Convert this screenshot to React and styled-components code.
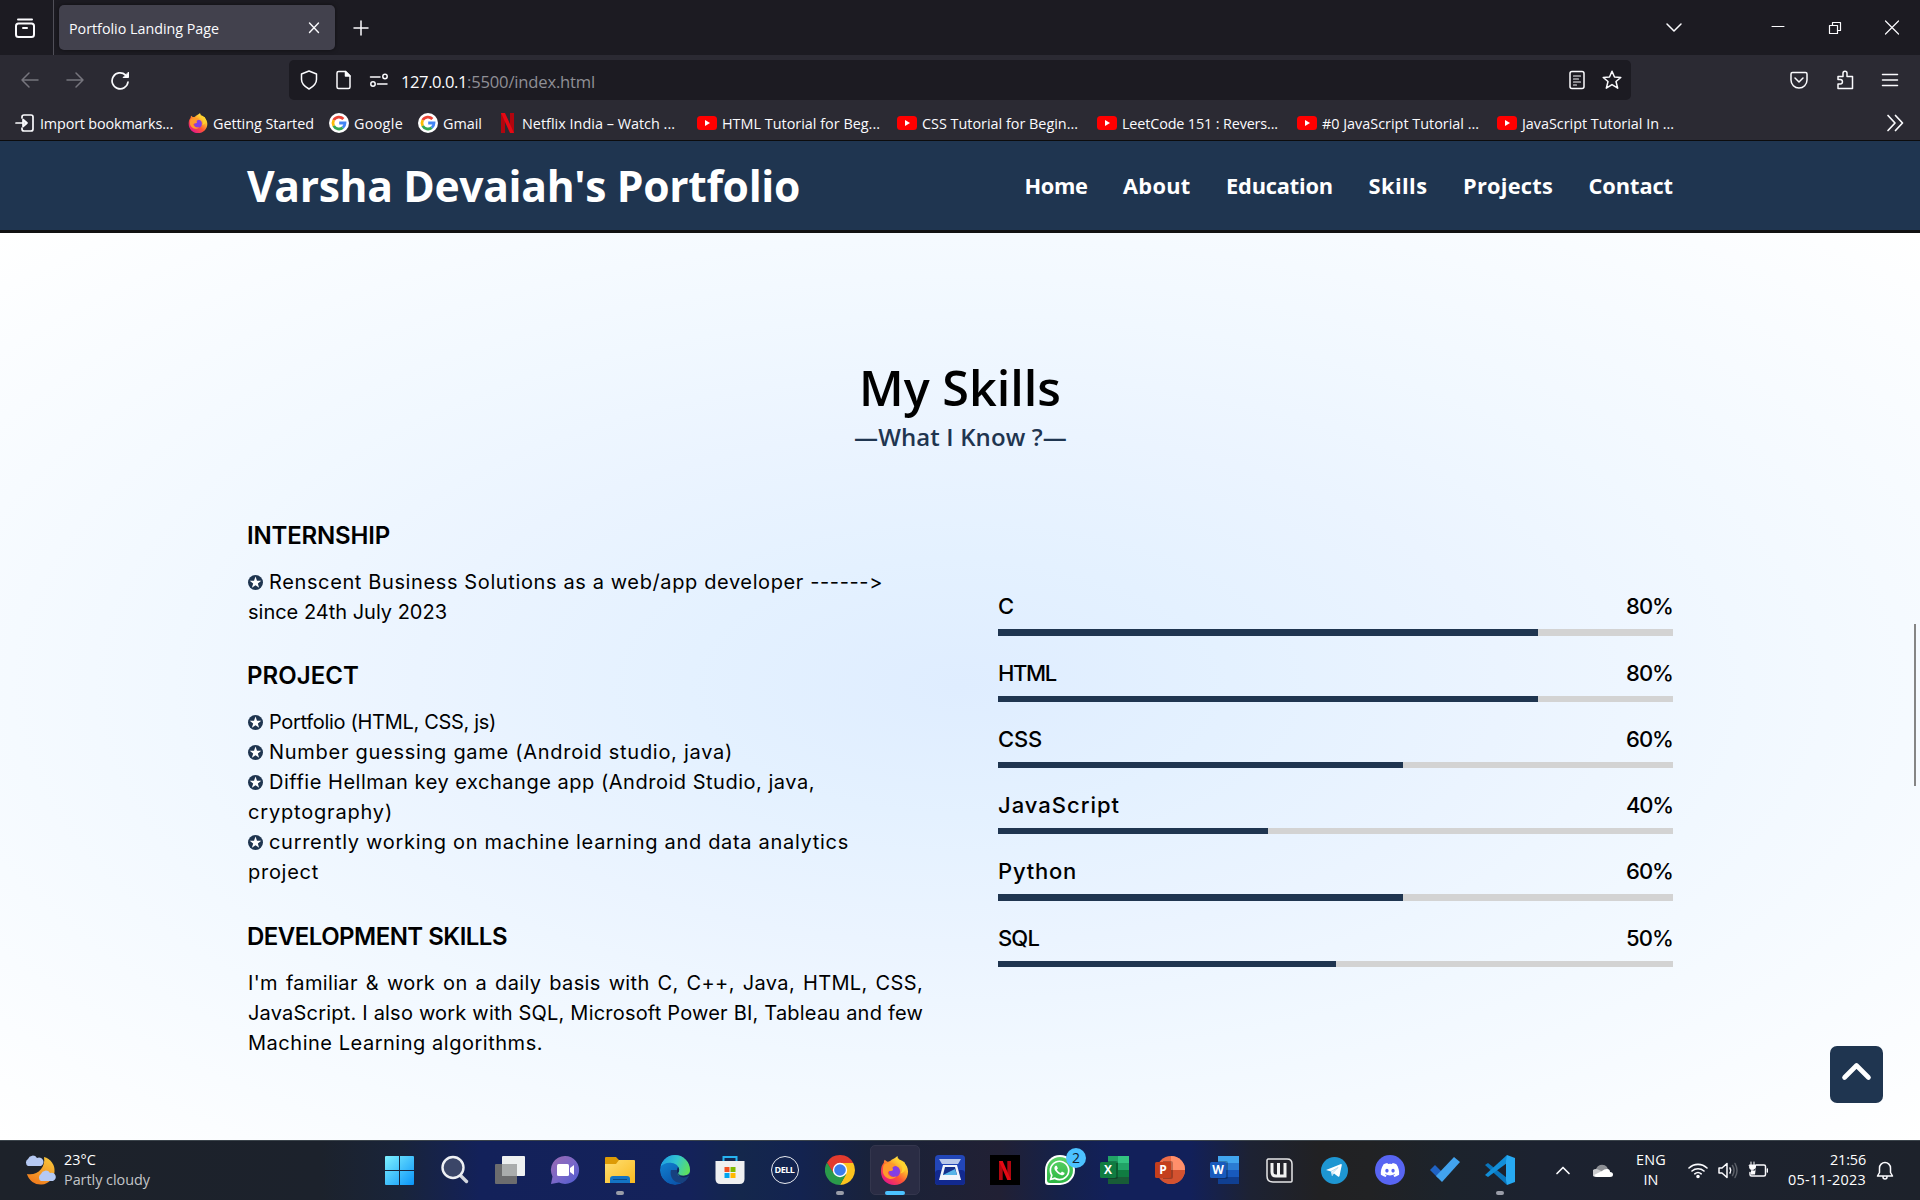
import React, { useLayoutEffect, useRef, useState } from "react";
import styled, { createGlobalStyle } from "styled-components";
import { FaDiscord, FaWhatsapp } from "react-icons/fa";

const GlobalStyle = createGlobalStyle`
  * { box-sizing: border-box; }
  html, body { margin: 0; padding: 0; overflow: hidden; background: #fff; }
  svg { display: block; flex: none; }
`;

const UI = `"Open Sans", "Noto Sans", sans-serif`;
const BODY = `Inter, "Open Sans", sans-serif`;
const NAVY = "#1f3550";

/* Single line of text tracked out (or in) to an exact measure. */
const FitBox = styled.span`
  display: block;
  flex: none;
  width: ${(p) => p.$w}px;
  white-space: pre;
  font-variant-ligatures: none;
`;
function Fit({ w, track, children }) {
  const ref = useRef(null);
  const [spacing, setSpacing] = useState(null);
  useLayoutEffect(() => {
    const natural = ref.current.getBoundingClientRect().width;
    const text = ref.current.textContent;
    const n = text.length;
    if (track !== undefined) {
      const spaces = text.split(" ").length - 1;
      setSpacing({ letterSpacing: track, wordSpacing: (w - natural - track * n) / spaces });
    } else setSpacing({ letterSpacing: (w - natural) / n });
  }, []);
  return (
    <FitBox $w={w}>
      <span ref={ref} style={spacing || undefined}>{children}</span>
    </FitBox>
  );
}

const Screen = styled.div`
  width: 1920px;
  height: 1200px;
  display: flex;
  flex-direction: column;
  overflow: hidden;
  font-family: ${UI};
`;

/* ---------- browser chrome ---------- */
const TabStrip = styled.div`
  height: 55px;
  background: #1c1b22;
  display: flex;
  align-items: center;
  color: #fbfbfe;
`;
const ViewButton = styled.div`
  width: 54px;
  height: 55px;
  padding-left: 14px;
  display: flex;
  align-items: center;
  border-right: 1px solid #504f58;
`;
const Tab = styled.div`
  width: 276px;
  height: 45px;
  margin-left: 5px;
  padding: 0 13px 0 10px;
  border-radius: 5px;
  background: #42414d;
  box-shadow: 0 0 4px rgba(0, 0, 0, 0.5);
  display: flex;
  align-items: center;
  justify-content: space-between;
  font-size: 14.3px;
`;
const TabTitle = styled.div`
  padding-top: 1px;
`;
const NewTab = styled.div`
  margin-left: 18px;
`;
const WindowButtons = styled.div`
  margin-left: auto;
  padding-right: 20px;
  display: flex;
  align-items: center;
`;
const Gap = styled.div`
  flex: none;
  width: ${(p) => p.$w}px;
`;
const Toolbar = styled.div`
  height: 50px;
  padding: 0 21px 0 20px;
  background: #2b2a33;
  color: #fbfbfe;
  display: flex;
  align-items: center;
`;
const NavButtons = styled.div`
  width: 269px;
  display: flex;
  gap: 25px;
  align-items: center;
`;
const UrlBar = styled.div`
  width: 1342px;
  height: 40px;
  padding: 0 9px 0 10px;
  border-radius: 5px;
  background: #1c1b22;
  display: flex;
  align-items: center;
  gap: 15px;
  font-size: 16.6px;
`;
const Url = styled.div`
  margin: 3px auto 0 -3px;
  display: flex;
  color: #fbfbfe;
`;
const Dim = styled.span`
  color: #8f8f96;
`;
const ToolbarEnd = styled.div`
  margin-left: auto;
  display: flex;
  gap: 26px;
`;
const Bookmarks = styled.div`
  height: 36px;
  padding: 1px 16px 0 15px;
  background: #2b2a33;
  border-bottom: 1px solid #0c0c0d;
  color: #fbfbfe;
  display: flex;
  align-items: center;
  justify-content: space-between;
  font-size: 14.4px;
`;
const BookmarkList = styled.div`
  display: flex;
  align-items: center;
`;
const Bookmark = styled.div`
  display: flex;
  align-items: center;
  flex: none;
  width: ${(p) => p.$w}px;
  gap: ${(p) => p.$gap || 5}px;
`;

/* ---------- web page ---------- */
const NavBar = styled.nav`
  height: 92px;
  padding: 0 247px 0 247px;
  background: ${NAVY};
  border-bottom: 3px solid #111;
  display: flex;
  align-items: center;
  justify-content: space-between;
  color: #fff;
`;
const Brand = styled.div`
  padding-bottom: 1px;
  font-size: 42.6px;
  font-weight: 700;
`;
const Links = styled.div`
  display: flex;
  gap: 35.5px;
  font-size: 21.8px;
  font-weight: 700;
`;
const Page = styled.main`
  height: 907px;
  display: flex;
  background: radial-gradient(ellipse farthest-corner at 50% 50%, #dfedff 0%, #e4f1ff 20%, #ebf4ff 40%, #f1f8ff 58%, #fff 100%);
`;
const Section = styled.section`
  width: 1905px;
  padding: 124px 232px 0 248px;
`;
const Title = styled.h2`
  margin: 0;
  height: 64px;
  padding-left: 611px;
  line-height: 60px;
  font-size: 48.5px;
  font-weight: 600;
  color: #000;
`;
const Subtitle = styled.div`
  height: 30px;
  padding: 1px 0 0 606px;
  line-height: 30px;
  font-size: 24px;
  font-weight: 600;
  color: ${NAVY};
`;
const Columns = styled.div`
  margin-top: 65px;
  display: grid;
  grid-template-columns: 675px 675px;
  column-gap: 75px;
  font-family: ${BODY};
  color: #000;
`;
const Block = styled.div`
  margin-bottom: ${(p) => p.$after}px;
  font-size: 20px;
  line-height: 30px;
`;
const BlockTitle = styled.h3`
  margin: 0 0 13px -1px;
  height: 38px;
  padding-top: 1px;
  line-height: 38px;
  font-size: 24px;
  font-weight: 600;
`;
const Line = styled.div`
  display: flex;
  align-items: center;
  gap: 6px;
`;
const Bars = styled.div`
  padding-top: 72.6px;
`;
const Skill = styled.div`
  height: 66.25px;
`;
const SkillHead = styled.div`
  height: 40.8px;
  padding-top: 0.8px;
  line-height: 34px;
  display: flex;
  justify-content: space-between;
  font-size: 22px;
  font-weight: 500;
`;
const Track = styled.div`
  height: 6.25px;
  background: #d3d3d3;
`;
const Fill = styled.div`
  height: 100%;
  background: ${NAVY};
`;
const Gutter = styled.div`
  width: 15px;
  display: flex;
  flex-direction: column;
  align-items: center;
  padding-left: 5px;
`;
const Thumb = styled.div`
  margin-top: 391px;
  width: 2px;
  height: 162px;
  background: #858585;
`;
const ToTop = styled.div`
  position: fixed;
  left: 1830px;
  top: 1046px;
  width: 53px;
  height: 57px;
  padding-bottom: 8px;
  border-radius: 7px;
  background: ${NAVY};
  display: flex;
  align-items: center;
  justify-content: center;
`;

/* ---------- taskbar ---------- */
const Taskbar = styled.footer`
  height: 60px;
  border-top: 1px solid #3b444b;
  color: #fff;
  display: flex;
  align-items: center;
  background: linear-gradient(90deg, #1d222a 0, #1c222c 320px, #19243a 400px, #13215a 480px, #14225a 690px, #14274c 740px, #132350 800px, #1a2238 880px, #212034 1000px, #15214a 1060px, #12205a 1110px, #12205a 1190px, #1d2233 1250px, #212123 1320px, #212224 1370px, #1c232c 1450px, #1c2230 1540px, #1d222b 1920px);
`;
const Weather = styled.div`
  flex: none;
  width: 372px;
  padding-left: 24px;
  display: flex;
  align-items: center;
  gap: 8px;
`;
const TwoLines = styled.div`
  font-size: 14.4px;
  line-height: 20px;
  padding-bottom: 2px;
  display: flex;
  flex-direction: column;
  align-items: ${(p) => p.$align || "flex-start"};
`;
const Faint = styled.div`
  color: #c3c5c8;
`;
const Apps = styled.div`
  display: flex;
`;
const AppCell = styled.div`
  position: relative;
  width: 55px;
  height: 57px;
  padding-bottom: 1px;
  display: flex;
  align-items: center;
  justify-content: center;
`;
const Tile = styled.div`
  width: 50px;
  height: 50px;
  border-radius: 5px;
  border: 1px solid #34364d;
  background: #2a2c44;
  display: flex;
  align-items: center;
  justify-content: center;
`;
const Running = styled.div`
  position: absolute;
  bottom: 4px;
  left: ${(p) => (p.$active ? 18 : 24)}px;
  width: ${(p) => (p.$active ? 20 : 8)}px;
  height: 4px;
  border-radius: 2px;
  background: ${(p) => (p.$active ? "#4cc2ff" : "#9a9da8")};
`;
const Badge = styled.div`
  position: absolute;
  left: 34px;
  top: 6px;
  width: 20px;
  height: 20px;
  border-radius: 10px;
  background: #4cc2ff;
  color: #10202c;
  font-size: 14px;
  line-height: 20px;
  text-align: center;
`;
const DellRing = styled.div`
  width: 28px;
  height: 28px;
  border: 1.5px solid #e8eaf0;
  border-radius: 50%;
  color: #fff;
  font: 700 9px/25px ${UI};
  letter-spacing: -0.5px;
  text-align: center;
`;
const NetflixTile = styled.div`
  width: 30px;
  height: 30px;
  background: #000;
  display: flex;
  align-items: center;
  justify-content: center;
`;
const WhatsApp = styled.div`
  width: 30px;
  height: 30px;
  border-radius: 15px 15px 15px 3px;
  background: #fff;
  display: flex;
  align-items: center;
  justify-content: center;
`;
const WhatsAppInner = styled.div`
  width: 26px;
  height: 26px;
  border-radius: 13px 13px 13px 3px;
  background: linear-gradient(#5bd266, #2cb742);
  display: flex;
  align-items: center;
  justify-content: center;
`;
const DiscordDisc = styled.div`
  width: 30px;
  height: 30px;
  border-radius: 50%;
  background: #5865f2;
  display: flex;
  align-items: center;
  justify-content: center;
`;
const Tray = styled.div`
  flex: 1;
  display: flex;
  align-items: center;
`;

/* ---------- icons ---------- */
const Line20 = ({ size = 20, sw = 1.5, children, color = "#fbfbfe", vb = 20 }) => (
  <svg width={size} height={size} viewBox={`0 0 ${vb} ${vb}`} fill="none" stroke={color} strokeWidth={sw} strokeLinecap="round" strokeLinejoin="round">
    {children}
  </svg>
);
const Firefox = ({ size = 20 }) => (
  <svg width={size} height={size} viewBox="0 0 30 30">
    <defs>
      <linearGradient id="ffa" x1="0.85" y1="0.1" x2="0.2" y2="0.95">
        <stop offset="0" stopColor="#fff44f" /><stop offset="0.3" stopColor="#ffb62b" />
        <stop offset="0.6" stopColor="#ff5634" /><stop offset="1" stopColor="#e5158a" />
      </linearGradient>
      <radialGradient id="ffb"><stop offset="0" stopColor="#7a3ff0" /><stop offset="1" stopColor="#8b3ddb" /></radialGradient>
    </defs>
    <path fill="url(#ffa)" d="M18 0c0 3 1 4 3 6 2-0 4 1 4 1 2 2 4 5 4 9 0 8-6 14-14 14S1 24 1 16c0-4 1-7 3-9 0-1 0-2 1-3 1 1 2 2 3 2 2 0 3-1 4-2 2-1 4-2 6-4z" />
    <circle cx="15" cy="16" r="5.8" fill="url(#ffb)" />
    <path fill="#ff9a2b" d="M4 9c3-2 6-2 8-1 1 0 4 0 4 1 0 2-3 2-3 3 0 2 1 2 0 3-2 1-4 0-5 2 1 4 5 6 9 4-4 5-12 3-14-4 0-3 0-6 1-8z" />
    <path fill="#ffd22e" d="M18 0c-1 4 2 7 4 9 2 3 1 7-1 9 6-1 7-7 4-12-1 0-1 0-2-1-2-1-5-2-5-5z" />
  </svg>
);
const Google = () => (
  <svg width="20" height="20" viewBox="0 0 20 20">
    <circle cx="10" cy="10" r="10" fill="#fff" />
    <g fill="none" strokeWidth="2.8">
      <path stroke="#ea4335" d="M4.7 7.2A6 6 0 0 1 14.4 6" />
      <path stroke="#fbbc05" d="M4.7 12.8A6 6 0 0 1 4.7 7.2" />
      <path stroke="#34a853" d="M13.8 14.6A6 6 0 0 1 4.7 12.8" />
      <path stroke="#4285f4" d="M10.2 10H16A6 6 0 0 1 13.8 14.6" />
    </g>
  </svg>
);
const NetflixMark = ({ w = 13, h = 20 }) => (
  <svg width={w} height={h} viewBox="0 0 13 20" preserveAspectRatio="none">
    <rect width="4" height="20" fill="#b1060f" /><rect x="9" width="4" height="20" fill="#b1060f" />
    <path fill="#e50914" d="M0 0h4l9 20H9z" />
  </svg>
);
const YouTube = () => (
  <svg width="20" height="20" viewBox="0 0 20 20">
    <rect y="3" width="20" height="14" rx="3.5" fill="#f00" /><path fill="#fff" d="M8 7l5 3-5 3z" />
  </svg>
);
const Bullet = () => (
  <svg width="15" height="15" viewBox="0 0 15 15">
    <circle cx="7.5" cy="7.5" r="7.5" fill={NAVY} />
    <path fill="#fff" d="M7.5 1.600l1.500 4.100 4.300.1-3.450 2.650 1.250 4.200-3.600-2.500-3.600 2.500 1.250-4.200L1.700 5.800l4.300-.1z" />
  </svg>
);
const Office = ({ letter, tag, colors, round }) => (
  <svg width="30" height="30" viewBox="0 0 30 30">
    {round ? (
      <>
        <circle cx="16" cy="15" r="14" fill="#ed6c47" />
        <path fill="#ff8f6b" d="M16 1a14 14 0 0 1 14 14H16z" />
        <path fill="#d35230" d="M2 15h28a14 14 0 0 1-28 0z" />
      </>
    ) : (
      colors.map((c, i) => <rect key={i} x="8" y={1 + i * 7} width="21" height="7" fill={c} />)
    )}
    {letter === "X" && <path fill="#33c481" d="M18 1h11v7H18z" />}
    {letter === "X" && <path fill="#21a366" d="M18 8h11v7H18z" />}
    <path fill="rgba(0,0,0,.25)" d="M8 6h8q2 0 2 2v14q0 2-2 2H8z" />
    <rect y="7" width="16" height="16" rx="1.5" fill={tag} />
    <text x="8" y="19.3" fontFamily="Open Sans, sans-serif" fontSize="12" fontWeight="700" fill="#fff" textAnchor="middle">{letter}</text>
  </svg>
);

const WindowsLogo = () => (
  <svg width="29" height="29" viewBox="0 0 29 29">
    <defs><linearGradient id="win" gradientUnits="userSpaceOnUse" x1="0" y1="0" x2="29" y2="29"><stop offset="0" stopColor="#7df0ff" /><stop offset="1" stopColor="#0a94f8" /></linearGradient></defs>
    <path fill="url(#win)" d="M1 0h13v14H0V1q0-1 1-1zM15 0h13q1 0 1 1v13H15zM0 15h14v14H1q-1 0-1-1zM15 15h14v13q0 1-1 1H15z" />
  </svg>
);
const SearchIcon = () => (
  <svg width="30" height="30" viewBox="0 0 30 30" fill="none">
    <path d="M20 20l6.5 6.5" stroke="#d4d7de" strokeWidth="3.4" strokeLinecap="round" />
    <circle cx="13" cy="12.5" r="10.5" fill="#3b4668" stroke="#eef0f4" strokeWidth="2.4" />
  </svg>
);
const TaskView = () => (
  <svg width="30" height="30" viewBox="0 0 30 30">
    <rect x="0" y="9" width="22" height="20" rx="1" fill="#6c6c6e" />
    <rect x="7" y="1" width="23" height="20" rx="1" fill="#eef0f0" />
    <rect x="7" y="9" width="15" height="12" fill="#aaacac" />
  </svg>
);
const Chat = () => (
  <svg width="30" height="30" viewBox="0 0 30 30">
    <defs><linearGradient id="chat" x1="0" y1="0" x2="1" y2="1"><stop offset="0" stopColor="#9a68b0" /><stop offset="0.5" stopColor="#7b68c8" /><stop offset="1" stopColor="#4d5ad0" /></linearGradient></defs>
    <path fill="url(#chat)" d="M15 1a14 14 0 1 1-6 26.6L1 29l1.500-7.500A14 14 0 0 1 15 1z" />
    <rect x="7" y="9" width="12" height="12" rx="1.500" fill="#fff" /><path fill="#fff" d="M20 13l4-3v10l-4-3z" />
  </svg>
);
const Folder = () => (
  <svg width="30" height="30" viewBox="0 0 30 30">
    <defs><linearGradient id="fold" x1="0" y1="0" x2="1" y2="1"><stop offset="0" stopColor="#ffdf72" /><stop offset="1" stopColor="#f9b91f" /></linearGradient></defs>
    <path fill="#dd9b06" d="M1 2h10l3 3h15v8H0V3q0-1 1-1z" />
    <path fill="url(#fold)" d="M0 9h11l3-4h15q1 0 1 1v22H0z" />
    <path fill="#1373c4" d="M5 28v-4q0-3 3-3h14q3 0 3 3v4z" /><path stroke="#0b4a86" d="M8 24.500h14" />
  </svg>
);
const Edge = () => (
  <svg width="30" height="30" viewBox="0 0 30 30">
    <defs>
      <linearGradient id="eg" x1="0" y1="0.300" x2="1" y2="0.600"><stop offset="0" stopColor="#1d9be4" /><stop offset="0.500" stopColor="#33c6cf" /><stop offset="1" stopColor="#61e254" /></linearGradient>
      <linearGradient id="eh" x1="0" y1="0" x2="0.700" y2="1"><stop offset="0" stopColor="#128bd9" /><stop offset="1" stopColor="#0a4fa6" /></linearGradient>
      <clipPath id="ec"><circle cx="15" cy="15" r="15" /></clipPath>
    </defs>
    <g clipPath="url(#ec)">
      <circle cx="15" cy="15" r="15" fill="url(#eh)" />
      <path fill="#17417f" d="M11 15c-2 8 4 14 12 13l8-6V15z" />
      <path fill="url(#eg)" d="M0 12C3 3 9-1 15-1c10 0 16 7 16 14 0 5-4 8-9 8-3 0-5-1-4-3 3-4 0-9-6-10-5-1-9 1-12 4z" />
      <path fill="#13255a" d="M18 12c-2 3-1 8 3 10 3 1 6 0 9-2v-1c-3 2-10 3-12-1 1-1 2-4 0-6z" />
    </g>
  </svg>
);
const Store = () => (
  <svg width="30" height="30" viewBox="0 0 30 30">
    <path fill="none" stroke="#27b3f0" strokeWidth="2" d="M8.500 7V2h13v5" />
    <path fill="#eff0f1" d="M0.500 6h29v18q0 5-5 5h-19q-5 0-5-5z" />
    <path fill="#f25022" d="M9.500 12h5v5h-5z" /><path fill="#7fba00" d="M15.500 12h5v5h-5z" />
    <path fill="#00a4ef" d="M9.500 18h5v5h-5z" /><path fill="#ffb900" d="M15.500 18h5v5h-5z" />
  </svg>
);
const Chrome = () => (
  <svg width="30" height="30" viewBox="0 0 30 30">
    <path fill="#fcc31e" d="M15 8h13.200A15 15 0 0 1 15 30l6-11z" />
    <path fill="#2a9a4a" d="M2 7.500A15 15 0 0 0 15 30l6.300-11-6.300 2-6-3z" />
    <path fill="#e33b2e" d="M2 7.500A15 15 0 0 1 28.200 8H15l-6 4-.5 6z" />
    <circle cx="15" cy="15" r="7.200" fill="#fff" /><circle cx="15" cy="15" r="5.800" fill="#3b7ded" />
  </svg>
);
const Scanner = () => (
  <svg width="30" height="30" viewBox="0 0 30 30">
    <rect width="30" height="30" rx="3.500" fill="#2246b8" /><rect y="15" width="30" height="15" rx="3.500" fill="#12298f" />
    <path fill="#b9c8ea" d="M4 4h22l-3 5H7z" /><path fill="#f2f5fb" d="M8 10h14l4 15H4z" />
    <path fill="#15308c" d="M10 12h10l2 8H8z" /><path fill="#58b4e8" d="M8 20l12-6 2 6z" />
  </svg>
);
const WIcon = () => (
  <svg width="27" height="25" viewBox="0 0 27 25" fill="none">
    <path d="M2 1h19q5 0 5 5v17q0 1-1 1H7q-6 0-6-6V2z" fill="#24242c" stroke="#e6e6e8" strokeWidth="1.500" />
    <path d="M6 5v9q0 4 4 4h9V5M12.500 5v12" stroke="#f3f3f3" strokeWidth="3" />
  </svg>
);
const Telegram = () => (
  <svg width="27" height="27" viewBox="0 0 27 27">
    <circle cx="13.500" cy="13.500" r="13.500" fill="#1e96d2" />
    <path fill="#fff" d="M5 13L20 7q1 0 .8 1L18.500 19q-.4 1-1.500.4L13 16.500l-2 2.500-1-4.500z" /><path stroke="#b7d9ed" d="M10 14.500l7-4-5 5-.8 3" fill="none" />
  </svg>
);
const Todo = () => (
  <svg width="30" height="30" viewBox="0 0 30 30">
    <path fill="#2063c4" d="M0 15l5-5 8 8-5 5z" /><path fill="#42a3ee" d="M6 21L24 2l6 5-18 20z" />
  </svg>
);
const VsCode = () => (
  <svg width="30" height="30" viewBox="0 0 30 30">
    <path fill="#0a76bd" d="M0 10l3-2 19 15v7z" /><path fill="#128fd9" d="M0 20L22 0v8L3 22z" />
    <path fill="#27a9f2" d="M22 0l8 3v24l-8 3-1-5V6z" />
  </svg>
);

const apps = [
  { icon: <WindowsLogo /> }, { icon: <SearchIcon /> }, { icon: <TaskView /> }, { icon: <Chat /> },
  { icon: <Folder />, run: true }, { icon: <Edge /> }, { icon: <Store /> },
  { icon: <DellRing>DELL</DellRing> }, { icon: <Chrome />, run: true },
  { icon: <Tile><Firefox size={29} /></Tile>, run: true, active: true },
  { icon: <Scanner /> }, { icon: <NetflixTile><NetflixMark w={12} h={19} /></NetflixTile> },
  { icon: <WhatsApp><WhatsAppInner><FaWhatsapp size={23} color="#fff" /></WhatsAppInner></WhatsApp>, badge: "2" },
  { icon: <Office letter="X" tag="#107c41" colors={["#21a366", "#107c41", "#107c41", "#185c37"]} /> },
  { icon: <Office letter="P" tag="#c43e1c" round /> },
  { icon: <Office letter="W" tag="#185abd" colors={["#41a5ee", "#2b7cd3", "#185abd", "#103f91"]} /> },
  { icon: <WIcon /> }, { icon: <Telegram /> },
  { icon: <DiscordDisc><FaDiscord size={20} color="#fff" /></DiscordDisc> },
  { icon: <Todo /> }, { icon: <VsCode />, run: true },
];

const bookmarks = [
  { icon: <Firefox />, cell: 141, w: 101, text: "Getting Started" },
  { icon: <Google />, cell: 89, w: 49, text: "Google" },
  { icon: <Google />, cell: 83, w: 39, text: "Gmail" },
  { icon: <NetflixMark />, cell: 196, w: 153, text: "Netflix India – Watch ...", gap: 8 },
  { icon: <YouTube />, cell: 200, w: 158, text: "HTML Tutorial for Beg..." },
  { icon: <YouTube />, cell: 200, w: 156, text: "CSS Tutorial for Begin..." },
  { icon: <YouTube />, cell: 200, w: 156, text: "LeetCode 151 : Revers..." },
  { icon: <YouTube />, cell: 200, w: 157, text: "#0 JavaScript Tutorial ..." },
  { icon: <YouTube />, cell: 200, w: 152, text: "JavaScript Tutorial In ..." },
];

const links = [["Home", 63], ["About", 67.5], ["Education", 107], ["Skills", 59], ["Projects", 90], ["Contact", 84.5]];

const blocks = [
  { title: ["INTERNSHIP", 143], after: 29, lines: [
    { b: 1, t: "Renscent Business Solutions as a web/app developer ------>", w: 614 },
    { t: "since 24th July 2023", w: 199 }] },
  { title: ["PROJECT", 112], after: 30, lines: [
    { b: 1, t: "Portfolio (HTML, CSS, js)", w: 227 },
    { b: 1, t: "Number guessing game (Android studio, java)", w: 464 },
    { b: 1, t: "Diffie Hellman key exchange app (Android Studio, java,", w: 546 },
    { t: "cryptography)", w: 145 },
    { b: 1, t: "currently working on machine learning and data analytics", w: 580 },
    { t: "project", w: 71 }] },
  { title: ["DEVELOPMENT SKILLS", 260], after: 0, lines: [
    { t: "I'm familiar & work on a daily basis with C, C++, Java, HTML, CSS,", w: 675, track: 0.35 },
    { t: "JavaScript. I also work with SQL, Microsoft Power BI, Tableau and few", w: 675 },
    { t: "Machine Learning algorithms.", w: 295 }] },
];

const skills = [["C", 80, 16], ["HTML", 80, 58], ["CSS", 60, 44], ["JavaScript", 40, 122], ["Python", 60, 79], ["SQL", 50, 41]];

export default function App() {
  return (
    <Screen>
      <GlobalStyle />
      <TabStrip>
        <ViewButton>
          <Line20 size={22} sw={2} vb={22}><rect x="2" y="6.500" width="18" height="13.500" rx="2.500" /><path d="M4 2.500h14" /><path d="M9 11h4" /></Line20>
        </ViewButton>
        <Tab>
          <TabTitle><Fit w={150}>Portfolio Landing Page</Fit></TabTitle>
          <Line20 size={16} sw={1.400} vb={16}><path d="M3.500 3l9 9.500M12.500 3l-9 9.500" /></Line20>
        </Tab>
        <NewTab><Line20 size={16} vb={16}><path d="M8 1v14M1 8h14" /></Line20></NewTab>
        <WindowButtons>
          <Line20 size={18} vb={18}><path d="M2 5l7 7 7-7" /></Line20>
          <Gap $w={88} />
          <Line20 size={14} sw={1} vb={14}><path d="M1 5.500h12" /></Line20>
          <Gap $w={43} />
          <Line20 size={14} sw={1.200} vb={14}><path d="M1.500 4.500h8v8h-8zM4.500 4.500v-3h8v8h-3" /></Line20>
          <Gap $w={42} />
          <Line20 size={16} sw={1.200} vb={16}><path d="M1.500 1l13 13M14.500 1l-13 13" /></Line20>
        </WindowButtons>
      </TabStrip>
      <Toolbar>
        <NavButtons>
          <Line20 color="#76757d"><path d="M18 10H2M9 3l-7 7 7 7" /></Line20>
          <Line20 color="#76757d"><path d="M2 10h16M11 3l7 7-7 7" /></Line20>
          <Line20 sw={1.700}><path d="M18 12A8 8 0 1 1 15.500 5" /><path d="M18.500 2.500v5h-5z" fill="#fbfbfe" strokeWidth="1" /></Line20>
        </NavButtons>
        <UrlBar>
          <Line20><path d="M10 1l7.500 3v5.500c0 4-3 7-7.500 9.500-4.500-2.500-7.500-5.500-7.500-9.500V4z" /></Line20>
          <Line20><path d="M4.500 1.500h7l4.500 4.500v11q0 1.500-1.500 1.500h-10Q3 18.500 3 17V3q0-1.500 1.500-1.500z" /><path d="M11.500 1.500V6H16z" fill="#fbfbfe" /></Line20>
          <Line20><path d="M1.500 7H11M8.500 14H18" /><circle cx="16" cy="6.500" r="2.200" /><circle cx="4" cy="14" r="2.200" /></Line20>
          <Url><Fit w={66}>127.0.0.1</Fit><Dim><Fit w={128}>:5500/index.html</Fit></Dim></Url>
          <Line20><rect x="3" y="1.500" width="14" height="17" rx="2" /><path d="M6.500 6h7M6.500 9h5M6.500 12h7M6.500 15h3" strokeWidth="1.200" /></Line20>
          <Line20><path d="M10 1.200l2.500 5.800 6.300.5-4.800 4 1.700 6.700-5.700-3.600-5.700 3.600L6 11.500l-4.800-4L7.500 7z" /></Line20>
        </UrlBar>
        <ToolbarEnd>
          <Line20><path d="M3.500 2.500h13q1.500 0 1.500 1.500v6a8 8 0 0 1-16 0V4q0-1.500 1.500-1.500z" /><path d="M6 8l4 4 4-4" /></Line20>
          <Line20><path d="M3 18.500V14h2.200a2.200 2.200 0 0 0 0-4.500H3V6.500h5V3.200a2 2 0 0 1 4 0v3.300h5.500v12z" /></Line20>
          <Line20 size={18} vb={18}><path d="M1.500 4.500h15M1.500 10h15M1.500 15.500h15" /></Line20>
        </ToolbarEnd>
      </Toolbar>
      <Bookmarks>
        <BookmarkList>
          <Bookmark $w={173}>
            <Line20 sw={1.700}><path d="M1 10h10M8 6.500l4 3.500-4 3.500zM7 5V4q0-2 2-2h7q2 0 2 2v12q0 2-2 2H9q-2 0-2-2v-1" /></Line20>
            <Fit w={133}>Import bookmarks...</Fit>
          </Bookmark>
          {bookmarks.map((b, i) => (
            <Bookmark key={i} $w={b.cell} $gap={b.gap}>{b.icon}<Fit w={b.w}>{b.text}</Fit></Bookmark>
          ))}
        </BookmarkList>
        <Line20 size={18} sw={1.700} vb={18}><path d="M2 1.500L9 9l-7 7.500M9.500 1.500l7 7.500-7 7.500" /></Line20>
      </Bookmarks>

      <NavBar>
        <Brand><Fit w={553}>Varsha Devaiah's Portfolio</Fit></Brand>
        <Links>{links.map(([t, w]) => <Fit key={t} w={w}>{t}</Fit>)}</Links>
      </NavBar>
      <Page>
        <Section>
          <Title><Fit w={202}>My Skills</Fit></Title>
          <Subtitle><Fit w={213}>—What I Know ?—</Fit></Subtitle>
          <Columns>
            <div>
              {blocks.map((b) => (
                <Block key={b.title[0]} $after={b.after}>
                  <BlockTitle><Fit w={b.title[1]}>{b.title[0]}</Fit></BlockTitle>
                  {b.lines.map((l) => (
                    <Line key={l.t}>{l.b && <Bullet />}<Fit w={l.w} track={l.track}>{l.t}</Fit></Line>
                  ))}
                </Block>
              ))}
            </div>
            <Bars>
              {skills.map(([name, value, w]) => (
                <Skill key={name}>
                  <SkillHead><Fit w={w}>{name}</Fit><Fit w={47}>{value + "%"}</Fit></SkillHead>
                  <Track><Fill style={{ width: value + "%" }} /></Track>
                </Skill>
              ))}
            </Bars>
          </Columns>
        </Section>
        <Gutter><Thumb /></Gutter>
      </Page>
      <ToTop>
        <Line20 size={34} sw={4.600} vb={34} color="#fff"><path d="M4.500 23.500l12-12 12 12" /></Line20>
      </ToTop>

      <Taskbar>
        <Weather>
          <svg width="32" height="32" viewBox="0 0 32 32">
            <defs><linearGradient id="moon" x1="0.800" y1="0" x2="0.300" y2="1"><stop offset="0" stopColor="#f8c63a" /><stop offset="1" stopColor="#f07a1c" /></linearGradient></defs>
            <path fill="url(#moon)" d="M20 2a14 14 0 1 1-17 17c10 2 19-6 17-17z" />
            <path fill="#b5c9f3" d="M4 11a4 4 0 0 1 0-7 5 5 0 0 1 9-1 4 4 0 0 1 4 8zM17 26a4 4 0 0 1 0-7 5 5 0 0 1 9-1 4 4 0 0 1 3 8z" />
          </svg>
          <TwoLines><Fit w={32}>23°C</Fit><Faint><Fit w={86}>Partly cloudy</Fit></Faint></TwoLines>
        </Weather>
        <Apps>
          {apps.map((a, i) => (
            <AppCell key={i}>{a.icon}{a.run && <Running $active={a.active} />}{a.badge && <Badge>{a.badge}</Badge>}</AppCell>
          ))}
        </Apps>
        <Tray>
          <Gap $w={28} />
          <Line20 size={16} sw={1.700} vb={16}><path d="M2 10.500l6-6 6 6" /></Line20>
          <Gap $w={22} />
          <svg width="20" height="14" viewBox="0 0 20 14"><path fill="#8d8f94" d="M3 9a6 6 0 0 1 12-4l2 3z" /><path fill="#c9cacc" d="M3 13a4 4 0 0 1 0-8c2 0 3 1 5 2l4 6z" /><path fill="#fff" d="M4 13q-2 0-3-2l8-4q2-2 5-2 3 0 3 3 3 0 3 2.500T17 13z" /></svg>
          <Gap $w={23} />
          <TwoLines $align="center"><Fit w={30}>ENG</Fit><Fit w={15}>IN</Fit></TwoLines>
          <Gap $w={22} />
          <Line20 sw={1.600}><path d="M1 7a13 13 0 0 1 18 0M4 10a9 9 0 0 1 12 0M6.800 12.800a5 5 0 0 1 6.400 0" /><circle cx="10" cy="15.500" r="1" fill="#fff" /></Line20>
          <Gap $w={10} />
          <Line20><path d="M1 7h3l5-4.500v14L4 12H1z" /><path d="M12 7q1.500 2.500 0 5" /><path d="M14.500 4.500q3 5 0 10M17 2.500q4 7 0 14" stroke="#5c6068" /></Line20>
          <Gap $w={10} />
          <Line20><path d="M8 4h8q1.500 0 1.500 1.500v8q0 1.500-1.500 1.500H3.500Q2 15 2 13.500v-2M19.500 8v3" /><path d="M3 13.500V9.500h5V6l-1 7.500z" fill="#fff" stroke="none" /><path d="M3 1v3M6 1v3M1.500 4h6v2q0 2-3 2.500t-3-2.500zM4 9v4" fill="#fff" strokeWidth="1" /></Line20>
          <Gap $w={20} />
          <TwoLines $align="flex-end"><Fit w={36}>21:56</Fit><Fit w={78}>05-11-2023</Fit></TwoLines>
          <Gap $w={9} />
          <Line20><path d="M10 1.500a5.500 5.500 0 0 0-5.500 5.500v4.500L2.500 15h15l-2-3.500V7A5.500 5.500 0 0 0 10 1.500zM8 16a2 2 0 0 0 4 0" /></Line20>
        </Tray>
      </Taskbar>
    </Screen>
  );
}
